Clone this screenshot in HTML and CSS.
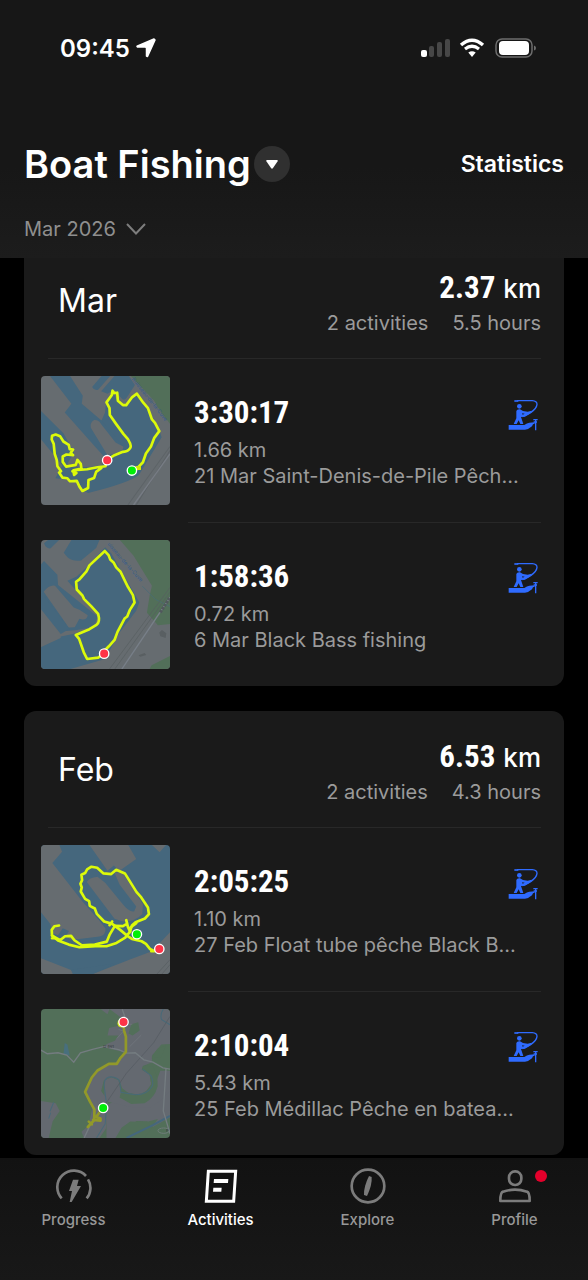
FILE: index.html
```html
<!DOCTYPE html>
<html lang="en">
<head>
  <meta charset="UTF-8">
  <meta name="viewport" content="width=device-width, initial-scale=1.0">
  <title>Activities</title>
  <link rel="stylesheet" href="styles.css">
</head>
<body>
  <!-- shared activity icon -->
  <svg class="sprite" aria-hidden="true">
    <symbol id="boat-fishing" viewBox="25 26 90 96">
      <path d="M44 32 H56" fill="none" stroke="currentColor" stroke-width="5"/>
      <path d="M52 31 H98 Q112 32 112 42 Q111 54 94 66 Q84 73 68 79" fill="none" stroke="currentColor" stroke-width="4"/>
      <circle cx="59" cy="48" r="7" fill="currentColor"/>
      <path d="M50 62 Q52 56 61 57 L70 62 L84 64 L96 61 L96 66 L76 79 L64 80 L71 101 L62 101 L57 90 L51 101 L42 101 L50 84 Z" fill="currentColor"/>
      <path d="M67 69 L75 70 L69 73 Z" fill="#1a1a1a"/>
      <path d="M27 104 L74 104 Q82 98 89 97 L105 96 L105 100 L100 102 L97 108 Q86 118 76 118 L27 118 Z" fill="currentColor"/>
      <path d="M101 88 H114 M108 88 V120 M102 95 H112" fill="none" stroke="currentColor" stroke-width="4"/>
    </symbol>
  </svg>

  <header class="top">
    <div class="status-bar">
      <span class="clock">09:45
        <svg width="20" height="20" viewBox="0 0 20 20"><path d="M18 1 L19 2 L11.500 18.500 L10.500 18 V10 L9.500 9 H1.500 L1 8.300 Z" fill="#fff" stroke="#fff" stroke-width="1.500" stroke-linejoin="round"/></svg>
      </span>
      <svg width="116" height="20" viewBox="0 0 116 20">
        <rect x="1" y="12" width="6" height="7" rx="2" fill="#fff"/>
        <rect x="9" y="8" width="5" height="11" rx="2" fill="#474747"/>
        <rect x="17" y="4" width="5" height="15" rx="2" fill="#474747"/>
        <rect x="25" y="1" width="5" height="18" rx="2" fill="#474747"/>
        <path d="M41 7 Q52 -2.500 63 7" fill="none" stroke="#fff" stroke-width="3.400"/>
        <path d="M45 11 Q52 5.500 59 11" fill="none" stroke="#fff" stroke-width="3.200"/>
        <path d="M48.300 14.500 Q52 12 55.700 14.500 L52 19 Z" fill="#fff"/>
        <rect x="76" y="1" width="36" height="18" rx="6" fill="none" stroke="#6d6d6d" stroke-width="1.500"/>
        <rect x="79" y="3" width="30" height="14" rx="4" fill="#fff"/>
        <path d="M114 7.500 Q116 8 116 10 Q116 12 114 12.500 Z" fill="#6d6d6d"/>
      </svg>
    </div>
    <div class="title-bar">
      <h1>Boat Fishing</h1>
      <button class="sport-button" aria-label="Change sport">
        <svg width="12" height="9" viewBox="0 0 12 9"><path d="M1.200 0 H10.800 Q12.400 0 11.500 1.500 L7 8 Q6 9.300 5 8 L.5 1.500 Q-.4 0 1.200 0 Z" fill="#fff"/></svg>
      </button>
      <a class="stats-link" href="#">Statistics</a>
    </div>
    <button class="month-button">Mar 2026
      <svg width="20" height="12" viewBox="0 0 20 12"><path d="M1 1 L10 10.500 L19 1" fill="none" stroke="#7d7d7d" stroke-width="2"/></svg>
    </button>
  </header>

  <main class="months">
    <section class="card">
      <div class="card-head">
        <h2>Mar</h2>
        <div class="totals">
          <div class="distance"><b>2.37</b><span>km</span></div>
          <div class="counts"><span>2 activities</span><span>5.5 hours</span></div>
        </div>
      </div>
      <a class="activity" href="#">
        <svg class="map" viewBox="15 19 386 386">
          <rect x="15" y="19" width="386" height="386" fill="#666c70"/>
          <g fill="#45677d">
            <path d="M42 19 H102 L140 78 L137 102 L196 152 L207 138 Q207 110 211 96 L228 67 L246 95 L268 109 L302 72 L332 108 L370 184 L376 202 L308 315 Q280 338 156 369 L140 361 L124 333 L58 325 L79 287 L15 208 V124 L82 190 L114 247 L90 288 L124 292 L193 290 L212 269 L187 242 L86 128 L106 102 Z"/>
            <path d="M168 52 L196 19 H222 L186 60 Q174 64 168 52 Z M195 65 L235 19 H278 L296 46 L273 82 Q264 97 254 83 L234 60 L214 72 Z"/>
          </g>
          <path d="M196 152 L262 231 L284 236 L282 215 L230 150 L214 112 Z" fill="#45677d"/>
          <path d="M164 174 Q160 160 174 151 Q188 150 194 162 L238 218 L262 231 Q258 250 240 251 L214 256 Z" fill="#666c70"/>
          <path d="M284 19 H401 V162 L373 126 L353 92 Z" fill="#526f59"/>
          <path id="brook-a" d="M286 29 L316 67 L352 111 L400 174" fill="none"/>
          <text class="brook"><textPath href="#brook-a">Ruisseau-de-la-Cuve</textPath></text>
          <path d="M401 230 L275 405 M401 242 L300 405" stroke="#5d6367" stroke-width="3" fill="none"/>
          <path d="M401 252 L292 405" stroke="#777c84" stroke-width="4" fill="none"/>
          <path class="track" d="M310 295 L301 297 L320 277 L329 251 L344 230 L354 204 L369 184 L356 159 L347 149 L335 115 L321 99 L302 72 L288 82 L270 106 L260 106 L245 93 L243 69 L234 70 L229 63 L227 76 L211 98 L220 115 L221 136 L240 163 L262 193 L275 208 Q289 231 280 237 Q276 244 260 246 L235 256 L212 270 L208 289 L184 292 L153 298 L116 301 L109 304 L121 309 L114 315 L112 301 L136 296 L134 282 L124 270 L119 285 L90 290 L80 276 L80 260 L91 254 L111 256 L104 249 L111 239 L101 238 L98 225 L82 215 L72 199 L59 194 L48 198 L47 209 L53 222 L56 252 L62 270 L64 289 L75 304 L69 308 L79 323 L94 325 L102 334 L122 333 L130 350 L139 363 L156 354 L157 330 L174 324 L180 306 L196 294"/>
          <path d="M298 288 H314 V300 H298 Z" fill="#d6e800"/>
          <circle class="pin finish" cx="213" cy="271" r="14"/>
          <circle class="pin start" cx="287" cy="302" r="14"/>
        </svg>
        <span class="info">
          <b>3:30:17</b>
          <span>1.66 km</span>
          <span>21 Mar Saint-Denis-de-Pile Pêch...</span>
        </span>
        <svg class="sport"><use href="#boat-fishing"/></svg>
      </a>
      <a class="activity" href="#">
        <svg class="map" viewBox="15 15 386 386">
          <rect x="15" y="15" width="386" height="386" fill="#666c70"/>
          <g fill="#45677d">
            <path d="M15 88 L24 78 L64 119 L66 150 L185 245 L172 275 L118 285 L91 287 L15 171 Z"/>
            <path d="M94 137 L122 124 L157 91 L207 37 L225 55 L291 169 L309 201 L300 227 L249 293 L207 371 L103 401 H15 V335 L74 304 L118 295 L176 272 Q190 258 186 240 Z"/>
            <path d="M24 25 L36 15 H69 L44 40 Q31 43 24 25 Z M83 53 L106 15 H190 L180 39 L135 76 Q112 80 95 67 Z"/>
          </g>
          <path d="M23 170 Q40 148 57 152 L113 217 L130 224 L155 240 Q152 257 130 251 L116 276 L98 277 Z" fill="#666c70"/>
          <path d="M15 205 L22 227 L74 300 L74 308 L15 335 Z" fill="#666c70"/>
          <path d="M22 180 L100 281 L74 296 L15 222 V170 Z" fill="#45677d"/>
          <path d="M251 15 H401 V266 L365 270 L332 233 L340 182 L347 152 L292 62 Z M401 362 L346 390 L340 401 H401 Z" fill="#526f59"/>
          <path id="brook-b" d="M213 28 L250 72 L315 143 L361 192 L401 212" fill="none"/>
          <text class="brook"><textPath href="#brook-b">uisseau-de-la-Cuve</textPath></text>
          <path d="M318 153 L358 193 L401 214" stroke="#466d7a" stroke-width="2" fill="none"/>
          <path d="M401 157 L220 401 M401 171 L236 401" stroke="#575e60" stroke-width="2" fill="none"/>
          <path d="M401 187 L257 401" stroke="#787f88" stroke-width="4" fill="none"/>
          <path d="M372 232 L399 189" stroke="#51585c" stroke-width="9" stroke-dasharray="8 3"/>
          <path d="M369 292 L377 284 L390 294 L388 308 L372 303 Z M307 360 L325 353 L330 359 L312 364 Z" fill="#595f62"/>
          <path class="track" d="M204 347 L218 333 L235 314 L244 290 L265 250 L273 244 L281 224 L295 202 L290 180 L275 155 L264 133 L253 110 L240 97 L232 82 L222 73 L217 60 L206 48 L194 59 L160 91 L151 109 L130 133 L120 140 L122 163 L139 181 L144 192 L165 213 L186 236 Q193 261 181 269 L160 282 L119 299 L129 311 L143 351 L153 371 L186 367 L204 355"/>
          <circle class="pin finish" cx="204" cy="355" r="14"/>
        </svg>
        <span class="info">
          <b>1:58:36</b>
          <span>0.72 km</span>
          <span>6 Mar Black Bass fishing</span>
        </span>
        <svg class="sport"><use href="#boat-fishing"/></svg>
      </a>
    </section>

    <section class="card">
      <div class="card-head">
        <h2>Feb</h2>
        <div class="totals">
          <div class="distance"><b>6.53</b><span>km</span></div>
          <div class="counts"><span>2 activities</span><span>4.3 hours</span></div>
        </div>
      </div>
      <a class="activity" href="#">
        <svg class="map" viewBox="15 15 386 386">
          <rect x="15" y="15" width="386" height="386" fill="#45677d"/>
          <g fill="#666c70">
            <path d="M15 15 H70 L78 35 L49 69 L139 184 L190 242 L208 265 Q210 284 190 289 L105 299 L90 287 L99 272 L80 264 L66 285 L52 280 L42 250 L15 216 Z"/>
            <path d="M160 15 H276 L300 57 L250 92 L233 76 L214 92 Z M347 15 H389 L370 37 Z"/>
            <path d="M152 126 Q158 113 184 110 L207 128 L258 190 Q280 218 294 213 L300 199 L250 133 L235 98 L257 96 L320 192 L318 222 Q290 248 258 243 L235 236 Z"/>
            <path d="M15 354 L105 389 L114 401 H401 V276 L347 333 L283 357 L170 401 H15 Z"/>
          </g>
          <path d="M105 389 L240 369 L170 401 H110 Z" fill="#45677d"/>
          <path d="M401 358 L362 401 M401 373 L377 401" stroke="#565d60" stroke-width="2" fill="none"/>
          <path class="track" d="M69 256 L55 258 L47 269 L48 286 L66 301 L98 313 L130 321 L178 318 L211 318 L241 308 L267 292 L281 275 L287 256 L298 246 L326 235 L338 222 L335 202 L315 172 L301 156 L266 100 L240 89 L225 102 L202 100 L183 83 L166 80 L153 88 L147 99 L136 104 L138 120 L133 131 L137 142 L134 154 L147 176 L159 183 L161 197 L176 205 L182 221 L204 244 L228 251 L252 269 L272 286 L287 296 L316 303 L329 311 L341 326 L352 331"/>
          <path class="track" d="M48 286 L72 300 L87 288 L105 287 L115 300 L137 315 L176 313 L212 304 L220 284 L236 257 L260 258 L273 250 L270 240 L275 260 L282 275 M220 255 L228 244 M283 262 L300 249 M48 294 L60 294 M345 333 L354 333"/>
          <circle class="pin start" cx="302" cy="282" r="14"/>
          <circle class="pin finish" cx="369" cy="326" r="14"/>
        </svg>
        <span class="info">
          <b>2:05:25</b>
          <span>1.10 km</span>
          <span>27 Feb Float tube pêche Black B...</span>
        </span>
        <svg class="sport"><use href="#boat-fishing"/></svg>
      </a>
      <a class="activity" href="#">
        <svg class="map" viewBox="15 15 386 386">
          <rect x="15" y="15" width="386" height="386" fill="#526f59"/>
          <g fill="#646970">
            <path d="M220 15 H401 V120 L375 121 L347 154 L347 174 L319 186 L318 197 L340 211 L345 240 L322 271 L281 270 L258 252 L249 227 L226 218 L203 228 L195 260 L215 289 L210 372 L190 401 H144 L136 382 L157 364 L169 310 L144 266 L170 211 L209 181 L239 174 L270 145 L233 137 L198 129 L215 118 L236 110 L247 94 L214 94 L219 72 L247 65 L256 42 Z"/>
            <path d="M15 290 L59 297 L71 320 L50 351 L38 401 H15 Z M211 303 L248 284 L290 302 L341 300 L371 273 L381 250 L401 238 V340 L349 368 L333 351 L300 350 L267 385 L247 401 H211 Z M194 16 L220 15 L214 31 Z"/>
            <path d="M205 290 V228 L226 219 L247 228 L254 262 L280 280 L345 272 L372 200 L401 200 V260 L371 290 L341 310 H290 L248 300 Z"/>
          </g>
          <path d="M255 262 L300 270 Q335 268 345 240 L340 211 L316 196 L322 185 L350 186 Q366 215 364 246 Q356 280 325 297 L285 299 L250 280 Z" fill="#526f59"/>
          <path d="M285 61 L306 55 L310 79 L289 94 L277 88 Z M346 162 L363 135 L388 125 L375 159 Z M256 370 L282 352 L330 353 L365 344 L325 401 H238 Z" fill="#526f59"/>
          <path d="M82 152 L86 117 L94 121 L101 154 Z" fill="#486f7d"/>
          <path d="M381 15 Q370 33 376 47 L401 62 M210 291 L205 252 Q200 221 222 218 Q248 219 251 235 L254 264 L292 271 Q329 274 345 250 Q355 239 344 214 L319 195 M211 301 L207 359 L181 401 M53 294 L42 321 M44 325 L38 343" stroke="#486a79" stroke-width="3" fill="none"/>
          <path d="M401 335 L351 362 L271 401" stroke="#45677d" stroke-width="6" fill="none"/>
          <path d="M401 37 L352 116 L270 208 L217 286 L157 368" stroke="#545a60" stroke-width="2" fill="none"/>
          <path d="M15 138 L34 149 L66 146 L92 153 L113 174 L133 146 L169 136 L205 127 L249 137 L271 147 L297 146 L323 167 L350 174 L380 191 L401 195 M389 192 L381 320 L401 388 M258 16 L271 52 M160 367 L144 401" stroke="#747c80" stroke-width="4" fill="none"/>
          <path d="M247 76 L262 81 L242 103 M280 128 L315 93 M288 61 L255 60" stroke="#747a80" stroke-width="2" fill="none"/>
          <ellipse cx="382" cy="379" rx="17" ry="8" fill="none" stroke="#7d8388" stroke-width="2"/>
          <text class="road" x="201" y="132">D 461</text>
          <text class="road" x="389" y="382">P</text>
          <path d="M262 67 L264 81 L269 98 L269 143 L253 161 L242 179 L218 179 L184 199 L167 220 L147 263 L162 293 L175 316 L174 348 L155 368 M158 352 L167 360 M195 318 L180 338 L193 343 L193 349 L171 347" stroke="#929929" stroke-width="8" stroke-linejoin="round" stroke-linecap="round" fill="none"/>
          <circle cx="256" cy="58" r="12" fill="#d8e815"/>
          <circle class="pin finish" cx="262" cy="54" r="14"/>
          <circle class="pin start" cx="201" cy="311" r="14"/>
        </svg>
        <span class="info">
          <b>2:10:04</b>
          <span>5.43 km</span>
          <span>25 Feb Médillac Pêche en batea...</span>
        </span>
        <svg class="sport"><use href="#boat-fishing"/></svg>
      </a>
    </section>
  </main>

  <nav class="tabs">
    <a href="#">
      <svg viewBox="165 54 108 108">
        <path d="M182 145 A49 49 0 0 1 255 78 M261 88 A49 49 0 0 1 257 145" fill="none" stroke="currentColor" stroke-width="8"/>
        <path d="M216 89 H233 L228 108 H240 L212 156 H206 L213 123 H204 Z" fill="currentColor"/>
      </svg>
      <span>Progress</span>
    </a>
    <a class="active" href="#">
      <svg viewBox="609 54 108 108">
        <path d="M625 64 H707 L701 154 H619 Z" fill="none" stroke="currentColor" stroke-width="9"/>
        <path d="M642 87 H685 L684 99 H641 Z M640 113 H665 L664 125 H639 Z" fill="currentColor"/>
      </svg>
      <span>Activities</span>
    </a>
    <a href="#">
      <svg viewBox="185 54 108 108">
        <circle cx="239" cy="108" r="49" fill="none" stroke="currentColor" stroke-width="8"/>
        <path d="M242 78 L250 81 Q252 104 236 138 L227 135 Q226 110 242 78 Z" fill="currentColor"/>
      </svg>
      <span>Explore</span>
    </a>
    <a href="#">
      <svg viewBox="624 54 108 108">
        <rect x="660" y="64" width="37" height="41" rx="18" fill="none" stroke="currentColor" stroke-width="8"/>
        <path d="M634 153 Q634 127 642 125 Q678 113 714 125 Q722 127 722 153 Z" fill="none" stroke="currentColor" stroke-width="8" stroke-linejoin="round"/>
      </svg>
      <span>Profile</span>
      <span class="dot"></span>
    </a>
  </nav>
</body>
</html>
```
FILE: styles.css
```css
* {
  box-sizing: border-box;
}

body {
  margin: 0;
  min-height: 100vh;
  display: flex;
  flex-direction: column;
  background: #000;
  color: #fff;
  font-family: Inter, "Liberation Sans", sans-serif;
}

a {
  color: inherit;
  text-decoration: none;
}

button {
  border: none;
  padding: 0;
  color: inherit;
  font: inherit;
  cursor: pointer;
}

.sprite {
  position: absolute;
  width: 0;
  height: 0;
}

/* header */
.top {
  position: sticky;
  top: 0;
  z-index: 1;
  height: 258px;
  padding: 32px 24px 0;
  background: linear-gradient(#171717 65%, #1c1c1c);
}

.status-bar {
  display: flex;
  justify-content: space-between;
  align-items: center;
  height: 32px;
  padding: 0 28px 0 36px;
}

.clock {
  display: flex;
  align-items: center;
  gap: 6px;
  font-size: 24px;
  font-weight: 600;
}

.title-bar {
  display: flex;
  align-items: center;
  height: 48px;
  margin-top: 76px;
}

h1 {
  margin: 0;
  font-size: 38px;
  font-weight: 600;
}

.sport-button {
  display: flex;
  align-items: center;
  justify-content: center;
  width: 36px;
  height: 36px;
  margin-left: 3px;
  border-radius: 50%;
  background: #303030;
}

.stats-link {
  margin-left: auto;
  font-size: 23px;
  font-weight: 600;
}

.month-button {
  display: flex;
  align-items: center;
  gap: 10px;
  margin-top: 29px;
  background: none;
  color: #8f8f8f;
  font-size: 20px;
  line-height: 24px;
}

/* month cards */
.months {
  flex: 1;
  display: flex;
  flex-direction: column;
  gap: 25px;
  margin-top: -16px;
  padding: 0 24px 3px;
}

.card {
  border-radius: 12px;
  background: #1a1a1a;
}

.card-head {
  display: flex;
  justify-content: space-between;
  align-items: center;
  height: 117px;
  margin: 0 23px 0 24px;
  padding-left: 10px;
  border-bottom: 1px solid #282828;
}

h2 {
  margin: 0;
  font-size: 32px;
  font-weight: 400;
}

.totals {
  padding-top: 8px;
}

.distance {
  display: flex;
  justify-content: flex-end;
  align-items: baseline;
  gap: 8px;
  font-size: 26px;
  font-weight: 500;
  line-height: 36px;
}

.distance b,
.info b {
  font-family: "Roboto Condensed", "Liberation Sans Narrow", sans-serif;
  font-size: 31px;
  font-weight: 700;
}

.counts {
  display: flex;
  gap: 24px;
  color: #9b9b9b;
  font-size: 20px;
  line-height: 32px;
}

.activity {
  position: relative;
  display: flex;
  height: 163px;
  padding: 17px 24px 17px 17px;
}

.activity + .activity {
  height: 164px;
  padding-top: 18px;
}

.activity + .activity::before {
  content: "";
  position: absolute;
  top: 0;
  left: 164px;
  right: 23px;
  border-top: 1px solid #282828;
}

.map {
  flex: none;
  width: 129px;
  height: 129px;
  border-radius: 4px;
}

.track {
  fill: none;
  stroke: #dcfa0a;
  stroke-width: 8;
  stroke-linejoin: round;
  stroke-linecap: round;
}

.pin {
  stroke: #fff;
  stroke-width: 4;
}

.start {
  fill: #00ee08;
}

.finish {
  fill: #ff3347;
}

.brook {
  fill: #365c8c;
  font-size: 16px;
}

.road {
  fill: #343a3c;
  font-size: 12px;
}

.info {
  flex: 1;
  display: flex;
  flex-direction: column;
  min-width: 0;
  padding: 17px 0 0 24px;
  color: #9b9b9b;
  font-size: 20px;
  line-height: 26px;
  white-space: nowrap;
}

.info b {
  margin-bottom: 4px;
  color: #fff;
  line-height: 40px;
}

.sport {
  position: absolute;
  top: 40px;
  right: 26px;
  width: 30px;
  height: 32px;
  color: #2f6bff;
}

/* bottom tabs */
.tabs {
  position: sticky;
  bottom: 0;
  z-index: 1;
  display: grid;
  grid-template-columns: repeat(4, 1fr);
  height: 122px;
  padding-top: 10px;
  background: linear-gradient(#121212, #181818);
}

.tabs a {
  position: relative;
  display: flex;
  flex-direction: column;
  align-items: center;
  gap: 6px;
  color: #989898;
  font-size: 15px;
  font-weight: 500;
  line-height: 20px;
}

.tabs svg {
  width: 36px;
  height: 36px;
  color: #7c7c7c;
}

.tabs .active,
.tabs .active svg {
  color: #fff;
}

.dot {
  position: absolute;
  top: 2px;
  left: calc(50% + 20px);
  width: 12px;
  height: 12px;
  border-radius: 50%;
  background: #e4002b;
}
```
